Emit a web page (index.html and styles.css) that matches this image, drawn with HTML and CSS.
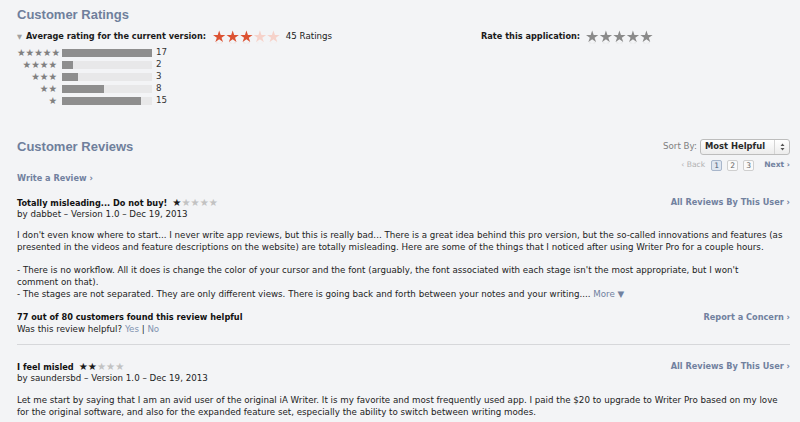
FILE: index.html
```html
<!DOCTYPE html>
<html lang="en">
<head>
<meta charset="utf-8">
<title>Customer Ratings</title>
<link rel="stylesheet" href="styles.css">
</head>
<body>
<div class="page">
  <section class="ratings">
    <h2 class="heading">Customer Ratings</h2>
    <div class="rating-row">
      <div class="avg">
        <span class="disclosure">▼</span>
        <span class="b">Average rating for the current version:</span>
        <span class="big-stars"><span class="red-on">★★★</span><span class="red-off">★★</span></span>
        <span class="count">45 Ratings</span>
      </div>
      <div class="rate">
        <span class="b">Rate this application:</span>
        <span class="big-stars gray">★★★★★</span>
      </div>
    </div>
    <div class="histogram">
      <div class="hrow"><span class="hstars">★★★★★</span><span class="track"><span class="fill" style="width:100%"></span></span><span class="hcount">17</span></div>
      <div class="hrow"><span class="hstars">★★★★</span><span class="track"><span class="fill" style="width:11.8%"></span></span><span class="hcount">2</span></div>
      <div class="hrow"><span class="hstars">★★★</span><span class="track"><span class="fill" style="width:17.6%"></span></span><span class="hcount">3</span></div>
      <div class="hrow"><span class="hstars">★★</span><span class="track"><span class="fill" style="width:47%"></span></span><span class="hcount">8</span></div>
      <div class="hrow"><span class="hstars">★</span><span class="track"><span class="fill" style="width:88.2%"></span></span><span class="hcount">15</span></div>
    </div>
  </section>

  <section class="reviews">
    <div class="reviews-head">
      <h2 class="heading">Customer Reviews</h2>
      <div class="sort">
        <span class="sort-label">Sort By:</span>
        <div class="select">
          <span class="select-text">Most Helpful</span>
          <span class="select-arrows">
            <svg width="5" height="8" viewBox="0 0 5 8"><path d="M2.5 0.5 L4.5 3 L0.5 3 Z M2.5 7.5 L4.5 5 L0.5 5 Z" fill="#555"/></svg>
          </span>
        </div>
      </div>
    </div>
    <div class="pager">
      <span class="back">‹ Back</span>
      <span class="pg current">1</span>
      <span class="pg">2</span>
      <span class="pg">3</span>
      <span class="next">Next ›</span>
    </div>
    <div class="write"><span class="link b">Write a Review ›</span></div>

    <article class="review">
      <div class="review-head">
        <div>
          <div class="title"><span class="b dark">Totally misleading... Do not buy!</span><span class="rstars"><span class="on">★</span><span class="off">★★★★</span></span></div>
          <div class="byline">by dabbet – Version 1.0 – Dec 19, 2013</div>
        </div>
        <span class="link b">All Reviews By This User ›</span>
      </div>
      <div class="body">
        <p>I don't even know where to start... I never write app reviews, but this is really bad... There is a great idea behind this pro version, but the so-called innovations and features (as presented in the videos and feature descriptions on the website) are totally misleading. Here are some of the things that I noticed after using Writer Pro for a couple hours.</p>
        <p>- There is no workflow. All it does is change the color of your cursor and the font (arguably, the font associated with each stage isn't the most appropriate, but I won't<br>comment on that).<br>- The stages are not separated. They are only different views. There is going back and forth between your notes and your writing.... <span class="more">More ▼</span></p>
      </div>
      <div class="helpful">
        <div>
          <div class="b dark">77 out of 80 customers found this review helpful</div>
          <div>Was this review helpful? <span class="yn">Yes</span> | <span class="yn">No</span></div>
        </div>
        <span class="link b">Report a Concern ›</span>
      </div>
    </article>

    <article class="review second">
      <div class="review-head">
        <div>
          <div class="title"><span class="b dark">I feel misled</span><span class="rstars"><span class="on">★★</span><span class="off">★★★</span></span></div>
          <div class="byline">by saundersbd – Version 1.0 – Dec 19, 2013</div>
        </div>
        <span class="link b">All Reviews By This User ›</span>
      </div>
      <div class="body">
        <p>Let me start by saying that I am an avid user of the original iA Writer. It is my favorite and most frequently used app. I paid the $20 to upgrade to Writer Pro based on my love for the original software, and also for the expanded feature set, especially the ability to switch between writing modes.</p>
      </div>
    </article>
  </section>
</div>
</body>
</html>
```

FILE: styles.css
```css
* { box-sizing: border-box; }
html, body { margin: 0; padding: 0; }
body {
  background: #f3f4f6;
  font-family: "DejaVu Sans", sans-serif;
  font-size: 8.7px;
  line-height: 11.8px;
  color: #222;
  overflow: hidden;
}
.page { padding: 7px 10px 0 17px; }

.heading {
  margin: 0;
  font-family: "Liberation Sans", Arial, sans-serif;
  font-weight: bold;
  font-size: 13px;
  line-height: 16px;
  color: #6f7f9c;
}
.b { font-weight: bold; font-size: 8.2px; }
.dark { color: #111; }
.link { color: #71819f; }

/* ratings */
.rating-row {
  display: grid;
  grid-template-columns: 464px 1fr;
  margin-top: 7px;
  height: 14px;
  align-items: center;
}
.avg, .rate { display: flex; align-items: center; color: #1a1a1a; }
.disclosure { font-size: 6.5px; color: #a0a0a0; width: 9px; line-height: 14px; }
.big-stars {
  font-size: 16px;
  letter-spacing: -0.8px;
  line-height: 14px;
  height: 14px;
  margin-left: 6px;
  -webkit-box-reflect: below -5px linear-gradient(transparent 62%, rgba(0,0,0,0.3));
}
.red-on { color: #dc5232; }
.red-off { color: #f6d2ca; }
.big-stars.gray { color: #8a8a8a; margin-left: 5px; }
.count { margin-left: 6px; }

.histogram { margin-top: 3px; }
.hrow { display: flex; align-items: center; height: 12px; }
.hstars { width: 40px; text-align: right; font-size: 9.6px; color: #808080; line-height: 12px; white-space: nowrap; }
.track { width: 90px; height: 8px; margin-left: 5px; background: #e8e8e9; display: flex; }
.fill { height: 100%; background: #8e8e8e; }
.hcount { margin-left: 4px; color: #333; }

/* reviews */
.reviews-head {
  display: flex;
  justify-content: space-between;
  align-items: center;
  margin-top: 32px;
  height: 16px;
}
.sort { display: flex; align-items: center; }
.sort-label { color: #808080; margin-right: 3px; }
.select {
  width: 90px;
  height: 16px;
  display: flex;
  align-items: center;
  border: 1px solid #bdbdbd;
  border-radius: 3px;
  background: linear-gradient(#ffffff, #ececec);
}
.select-text { flex: 1; padding-left: 4px; font-weight: bold; font-size: 8.4px; color: #2a2a2a; }
.select-arrows {
  width: 15px;
  height: 100%;
  border-left: 1px solid #d4d4d4;
  display: flex;
  align-items: center;
  justify-content: center;
}

.pager {
  display: flex;
  justify-content: flex-end;
  align-items: center;
  height: 12px;
  margin-top: 4px;
  font-size: 7.6px;
}
.back { color: #b0b0b0; margin-right: 6px; }
.pg {
  width: 11px;
  height: 11px;
  line-height: 9px;
  text-align: center;
  border: 1px solid #cfcfcf;
  border-radius: 2px;
  background: #fafafa;
  color: #666;
  margin-right: 5px;
}
.pg.current { background: #dfe6f0; border-color: #a8b6cb; color: #4a5a75; }
.next { color: #71819f; font-weight: bold; margin-left: 5px; }

.write { margin-top: 2px; height: 12px; }

.review { margin-top: 12px; }
.review-head { display: flex; justify-content: space-between; align-items: flex-start; }
.title { height: 12px; }
.rstars { font-size: 10.2px; margin-left: 5px; }
.rstars .on { color: #1a1a1a; }
.rstars .off { color: #c2c2c2; }
.byline { color: #222; }
.body { margin-top: 9px; }
.body p { margin: 0 0 11.8px 0; max-width: 768px; }
.more { color: #71819f; }
.helpful { display: flex; justify-content: space-between; align-items: flex-start; margin-top: 1px; }
.yn { color: #8193b0; }

.review.second {
  margin-top: 8px;
  padding-top: 16px;
  border-top: 1px solid #d6d7da;
}
.review.second .body { margin-top: 10px; }
```
